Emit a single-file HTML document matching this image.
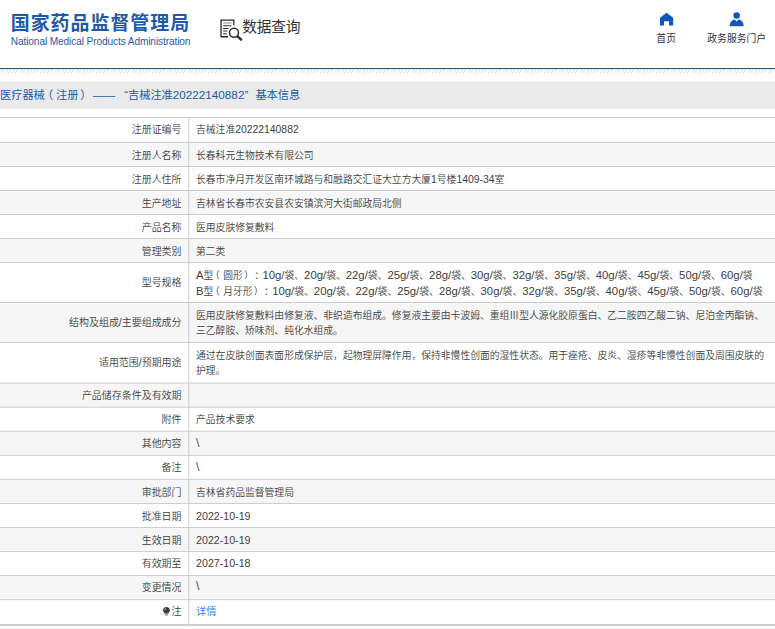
<!DOCTYPE html>
<html lang="zh-CN">
<head>
<meta charset="utf-8">
<title>数据查询</title>
<style>
html,body{margin:0;padding:0;background:#fff;}
body{text-spacing-trim:space-all;width:775px;height:629px;overflow:hidden;position:relative;font-family:"Liberation Sans","Noto Sans CJK SC",sans-serif;}
#wrap{position:absolute;left:0;top:0;width:934px;height:758px;transform:scale(0.83);transform-origin:0 0;color:#333;}
.logo{position:absolute;left:13px;top:13px;white-space:nowrap;}
.logo .cn{font-size:22.8px;font-weight:bold;color:#1f5aa6;line-height:30px;letter-spacing:1.2px;margin-top:-0.3px;}
.logo .en{font-size:12.2px;letter-spacing:-0.13px;color:#1f5aa6;line-height:14px;margin-top:-0.2px;}
.sjcx{position:absolute;left:265px;top:20px;height:32px;white-space:nowrap;}
.sjcx svg{position:absolute;left:-2.35px;top:0.5px;}
.sjcx span{position:absolute;left:27px;top:0;font-size:17.7px;line-height:26px;color:#333;letter-spacing:-0.3px;}
.nav{position:absolute;top:38.8px;text-align:center;font-size:11.8px;line-height:16px;color:#333;white-space:nowrap;}
.ico{position:absolute;}
.bline{position:absolute;left:0;top:68px;width:775px;height:1px;background:#2d5587;}
.bline2{position:absolute;left:0;top:69px;width:775px;height:1px;background:#dcecf8;}
.hatch{position:absolute;left:0;top:70px;width:775px;height:3px;background:repeating-linear-gradient(135deg,#d4d4d4 0,#d4d4d4 0.8px,#fff 0.8px,#fff 2.475px);}
.band{position:absolute;left:0;top:97.5px;width:934px;height:33px;background:#eaeaea;}
.band span{position:absolute;left:0;top:0;line-height:33px;font-size:13.5px;color:#1d5aa7;white-space:nowrap;}
.band i{font-style:normal;}
.band .pl{position:relative;left:-3.5px;}
.band .pr{position:relative;left:2.2px;}
td .pl{position:relative;left:-4px;}
td .pr{position:relative;left:1.4px;}
td .pc{position:relative;left:1.9px;}
.band .bl{font-size:14.1px;}
table{position:absolute;left:0;top:141px;width:934px;table-layout:fixed;border-collapse:collapse;font-size:11.8px;line-height:19.2px;color:#404040;font-weight:350;}
td{border:1px solid #c4c4c4;padding:5.5px 8.5px 3.22px 8.7px;vertical-align:middle;white-space:nowrap;}
td:first-child{text-align:right;padding-right:7.8px;font-size:12px;border-left:none;}
td:last-child{border-right:none;}
tr:nth-child(even) td{background:#f6f6f6;}
tr:first-child td{padding-top:5.3px;padding-bottom:4.9px;}
tr.w td{padding-top:5.5px;padding-bottom:3.3px;}
tr.w1 td{padding-top:5.5px;padding-bottom:3.2px;}
tr.w3 td{padding-top:5.4px;padding-bottom:4.4px;}
tr:last-child td{padding-bottom:4.2px;border-bottom:2px solid #c4c4c4;}
.l.bs{font-weight:400;color:#555;}
a{color:#2a8bf2;text-decoration:none;font-weight:400;font-size:12.3px;line-height:1;}
.l{font-size:12.5px;line-height:1;display:inline-block;transform:scaleY(1.08);transform-origin:50% 84.65%;}
.m .l{font-size:13.66px;transform:scaleY(0.94);}
.d .l{font-size:12.84px;}
.l.bs{font-size:15px;transform:translateY(-0.9px);}
</style>
</head>
<body>
<div id="wrap">
  <div class="logo">
    <div class="cn">国家药品监督管理局</div>
    <div class="en">National Medical Products Administration</div>
  </div>
  <div class="sjcx">
    <svg width="31.33" height="31.33" viewBox="218 17 26 26" fill="none" stroke="#2b2b33" stroke-width="1.3">
      <path d="M233.5 24.8V19.7H220.75V36.3H227.8"/>
      <path d="M222.9 22.6H231.2" stroke="#8a8a90" stroke-width="1"/>
      <path d="M222.9 25.4H231.2M222.9 28H228.2M222.9 30.6H227M222.9 33.4H226.4" stroke-width="1"/>
      <circle cx="233.7" cy="32.3" r="4.5" stroke-width="1.45"/>
      <path d="M237.3 35.9L240.8 39.2" stroke-width="2.4" stroke-linecap="round"/>
    </svg>
    <span>数据查询</span>
  </div>
  <svg class="ico" style="left:793.98px;top:14.46px" width="19.28" height="19.28" viewBox="659 12 16 16"><path d="M666.55 13.1L673.15 18.2V25.9H669V21.7H663.95V25.9H660V18.2Z" fill="#0f56bd"/></svg>
  <svg class="ico" style="left:878.31px;top:14.46px" width="19.28" height="19.28" viewBox="729 12 16 16"><circle cx="736.9" cy="15.95" r="3.25" fill="#0f56bd"/><path d="M729.9 26.6C730.1 23 731.9 20.5 734.5 20L735.1 20L736.9 22.1L738.7 20L739.3 20C742 20.5 743.8 23 744 26.6Z" fill="#0f56bd"/></svg>
  <div class="nav" style="left:772.6px;width:60px;">首页</div>
  <div class="nav" style="left:847.6px;width:80px;">政务服务门户</div>
  
  <div class="band"><span><i id="b1">医疗器械</i><i class="pl">（</i><i id="b2">注册</i><i class="pr">）</i> <i id="b3">——</i> <i id="b4" style="margin-left:7.2px">“</i><i id="b5">吉械注准</i><i id="b6" class="bl">20222140882</i><i id="b7">”</i> <i id="b8" style="margin-left:5px">基本信息</i></span></div>
  <table><colgroup><col style="width:227px"><col></colgroup>
    <tr><td>注册证编号</td><td>吉械注准<span class="l">20222140882</span></td></tr>
    <tr><td>注册人名称</td><td>长春科元生物技术有限公司</td></tr>
    <tr><td>注册人住所</td><td>长春市净月开发区南环城路与和融路交汇证大立方大厦<span class="l">1</span>号楼<span class="l">1409-34</span>室</td></tr>
    <tr><td>生产地址</td><td>吉林省长春市农安县农安镇滨河大街邮政局北侧</td></tr>
    <tr><td>产品名称</td><td>医用皮肤修复敷料</td></tr>
    <tr><td>管理类别</td><td>第二类</td></tr>
    <tr class="m w w1"><td>型号规格</td><td><span class="l">A</span>型<span class="pl">（</span>圆形<span class="pr">）</span><span class="pc">：</span><span class="l">10g/</span>袋、<span class="l">20g/</span>袋、<span class="l">22g/</span>袋、<span class="l">25g/</span>袋、<span class="l">28g/</span>袋、<span class="l">30g/</span>袋、<span class="l">32g/</span>袋、<span class="l">35g/</span>袋、<span class="l">40g/</span>袋、<span class="l">45g/</span>袋、<span class="l">50g/</span>袋、<span class="l">60g/</span>袋<br><span class="l">B</span>型<span class="pl">（</span>月牙形<span class="pr">）</span><span class="pc">：</span><span class="l">10g/</span>袋、<span class="l">20g/</span>袋、<span class="l">22g/</span>袋、<span class="l">25g/</span>袋、<span class="l">28g/</span>袋、<span class="l">30g/</span>袋、<span class="l">32g/</span>袋、<span class="l">35g/</span>袋、<span class="l">40g/</span>袋、<span class="l">45g/</span>袋、<span class="l">50g/</span>袋、<span class="l">60g/</span>袋</td></tr>
    <tr class="w"><td>结构及组成<span class="l">/</span>主要组成成分</td><td>医用皮肤修复敷料由修复液、非织造布组成。修复液主要由卡波姆、重组<span style="display:inline-block;width:1em;text-align:center;line-height:1">Ⅲ</span>型人源化胶原蛋白、乙二胺四乙酸二钠、尼泊金丙酯钠、<br>三乙醇胺、矫味剂、纯化水组成。</td></tr>
    <tr class="w w3"><td>适用范围<span class="l">/</span>预期用途</td><td>通过在皮肤创面表面形成保护层，起物理屏障作用，保持非慢性创面的湿性状态。用于痤疮、皮炎、湿疹等非慢性创面及周围皮肤的<br>护理。</td></tr>
    <tr><td>产品储存条件及有效期</td><td></td></tr>
    <tr><td>附件</td><td>产品技术要求</td></tr>
    <tr><td>其他内容</td><td><span class="l bs">\</span></td></tr>
    <tr><td>备注</td><td><span class="l bs">\</span></td></tr>
    <tr><td>审批部门</td><td>吉林省药品监督管理局</td></tr>
    <tr class="d"><td>批准日期</td><td><span class="l">2022-10-19</span></td></tr>
    <tr class="d"><td>生效日期</td><td><span class="l">2022-10-19</span></td></tr>
    <tr class="d"><td>有效期至</td><td><span class="l">2027-10-18</span></td></tr>
    <tr><td>变更情况</td><td><span class="l bs">\</span></td></tr>
    <tr><td><svg width="9" height="11" viewBox="0 0 9 11" style="vertical-align:-1px;margin-right:2.2px"><path d="M4.5 0.2C2 0.2 0.3 2 0.3 4.2C0.3 5.6 1.2 6.5 2 7.4V8.1H7V7.4C7.8 6.5 8.7 5.6 8.7 4.2C8.7 2 7 0.2 4.5 0.2Z" fill="#3c3c3c"/><rect x="2.3" y="8.6" width="4.4" height="0.8" fill="#555"/><rect x="2.9" y="9.8" width="3.2" height="0.8" fill="#555"/><ellipse cx="3" cy="2.9" rx="1.1" ry="1.3" fill="#8a8a8a" transform="rotate(35 3 2.9)"/></svg>注</td><td><a>详情</a></td></tr>
  </table>
</div>
<div class="bline"></div><div class="bline2"></div><div class="hatch"></div>
</body>
</html>
